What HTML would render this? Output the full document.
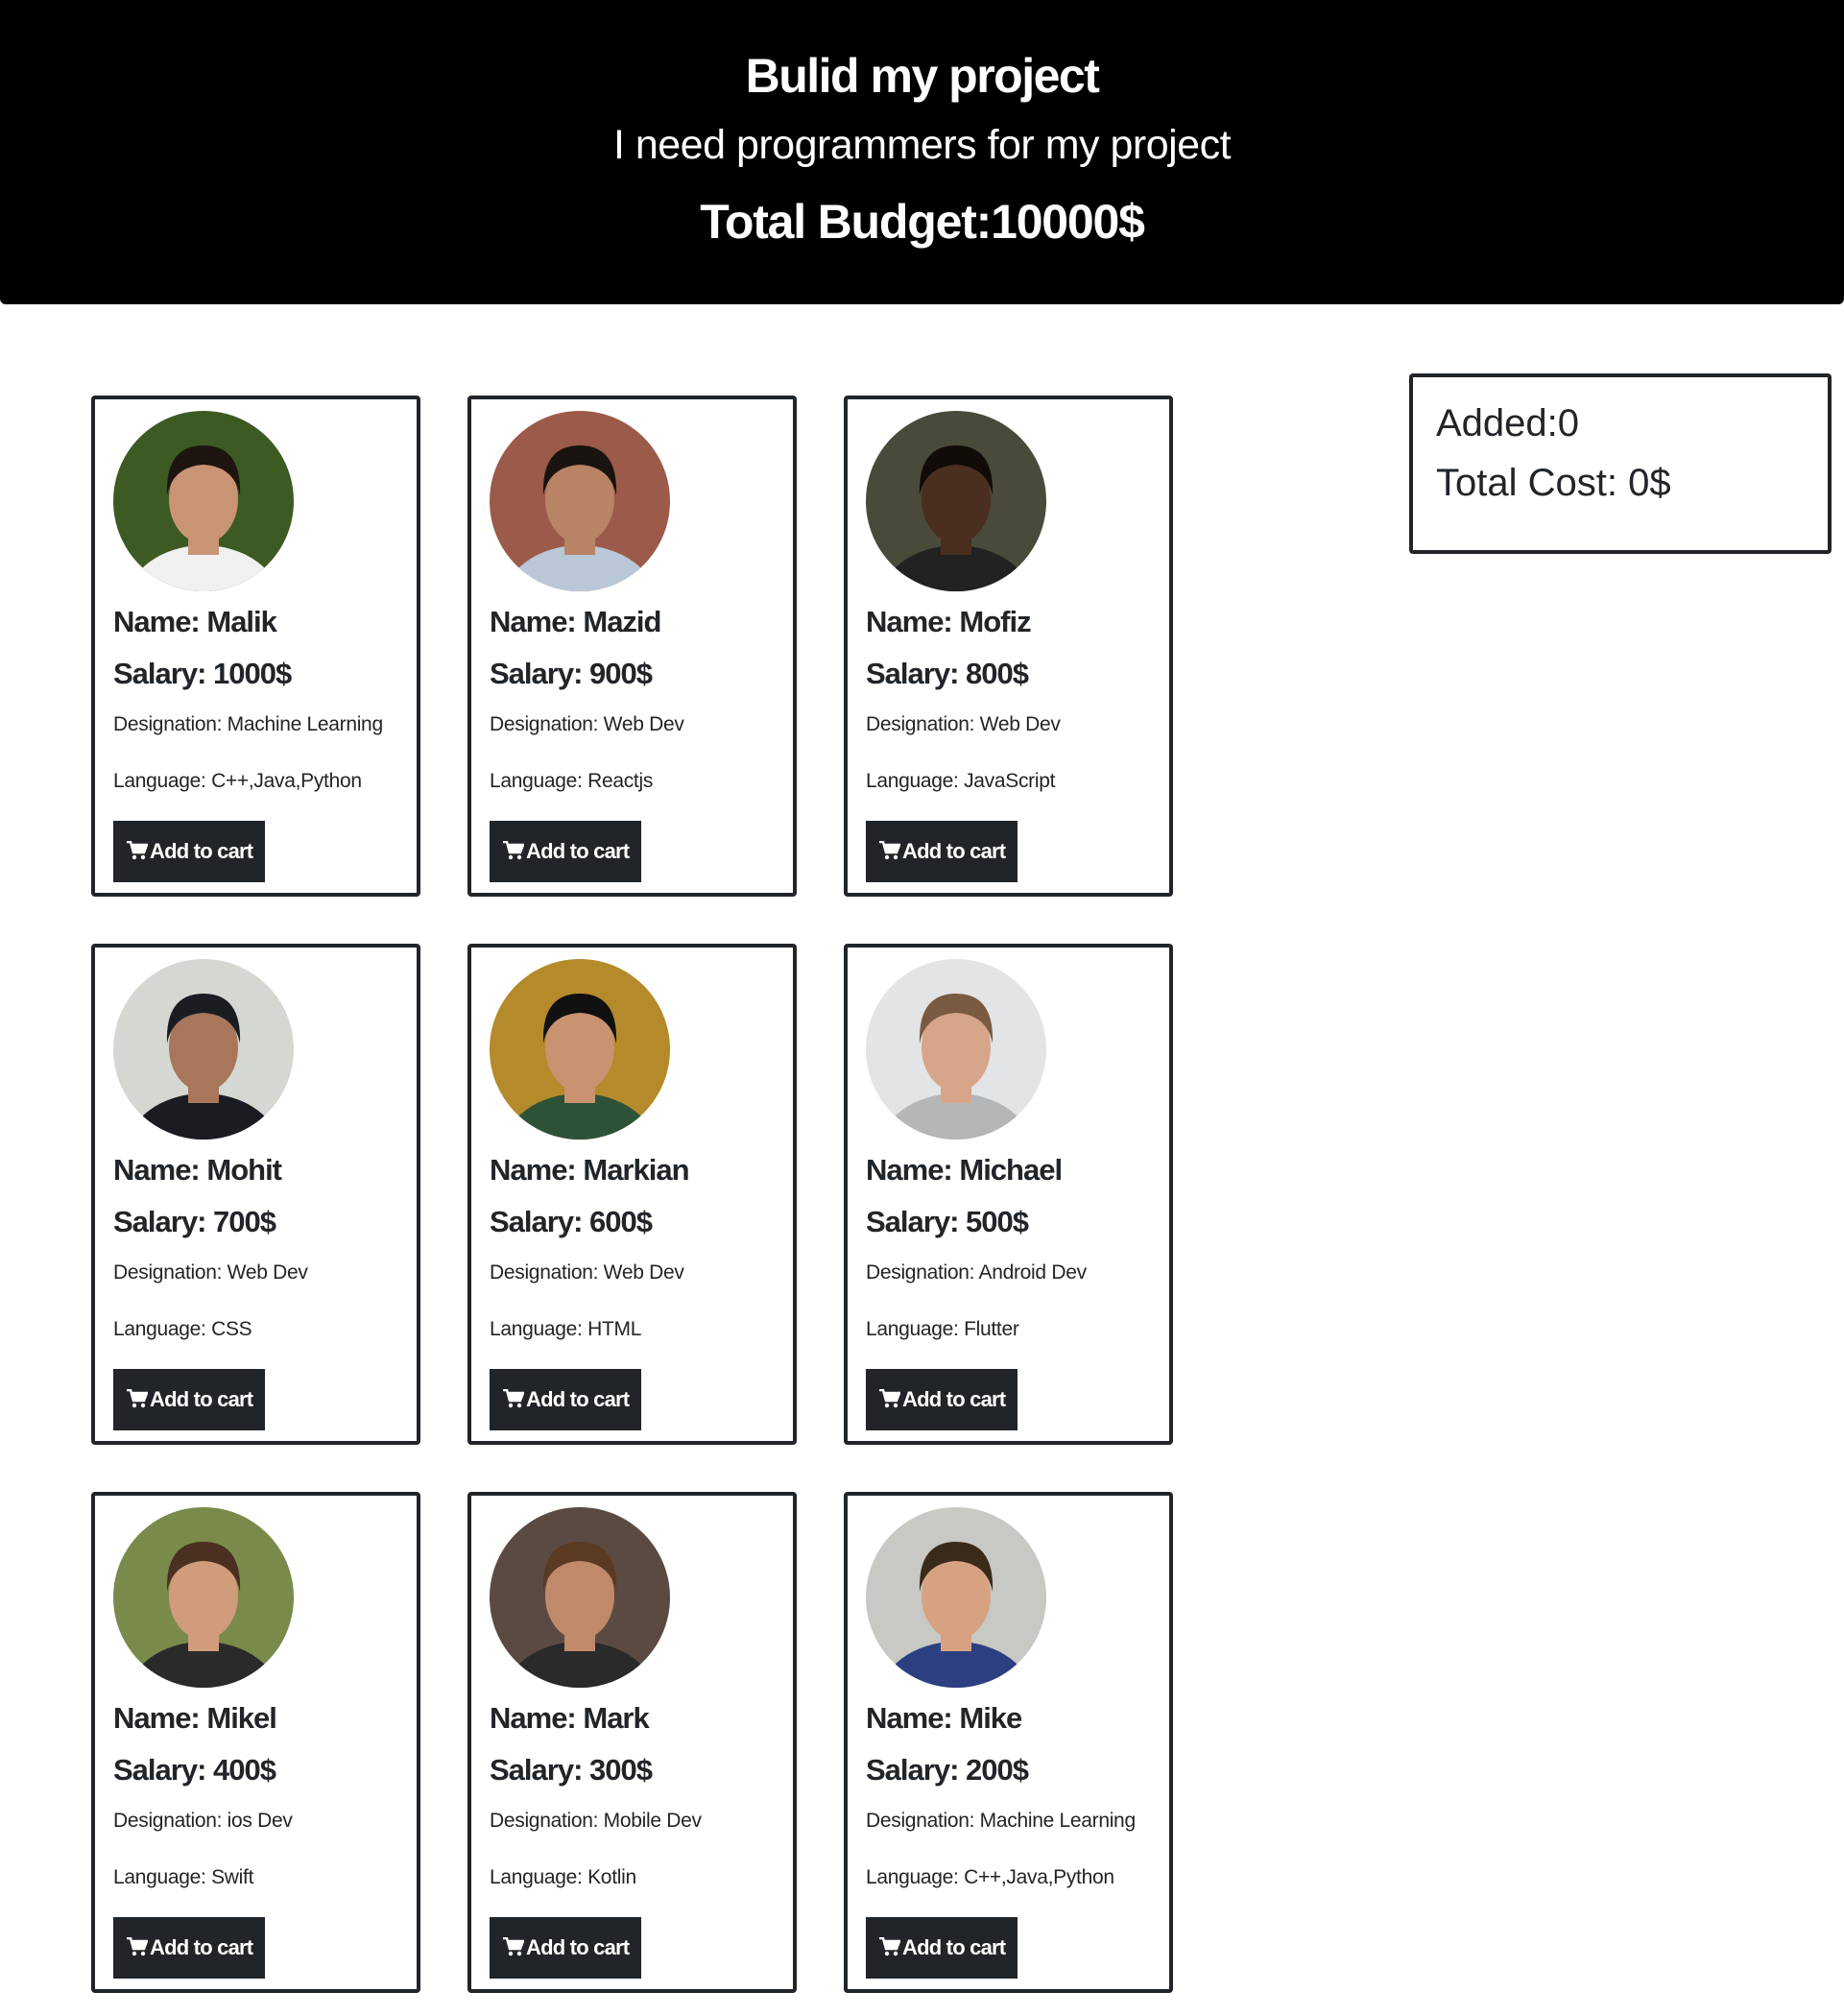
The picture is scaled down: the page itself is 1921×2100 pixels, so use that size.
<!DOCTYPE html>
<html><head><meta charset="utf-8"><style>
body{margin:0;width:1921px;height:2100px;background:#fff;position:relative;overflow:hidden;font-family:"Liberation Sans",sans-serif;color:#212529}
.hd{position:absolute;left:0;top:0;width:1921px;height:317px;background:#000;border-radius:0 0 6px 6px;color:#fff;text-align:center}
.hd div{position:absolute;left:0;width:100%;white-space:nowrap}
.card{position:absolute;border:4px solid #212529;border-radius:4px;box-sizing:border-box;width:343px;height:522px}
.card svg{position:absolute;left:19px;top:12px}
.card .t{position:absolute;left:19px;white-space:nowrap}
.n{font-weight:bold;font-size:31px;letter-spacing:-1px}
.d{font-size:21px;letter-spacing:-0.3px}
.btn{position:absolute;left:19px;top:439px;width:158px;height:64px;background:#212529;color:#fff;font-weight:bold;font-size:22px;letter-spacing:-0.8px;line-height:64px}
.btn svg{position:static;vertical-align:middle;margin:-4px 2px 0 14px}
.cart{position:absolute;left:1468px;top:389px;width:440px;height:188px;border:4px solid #212529;border-radius:4px;box-sizing:border-box;font-size:40px}
</style></head><body>
<div class="hd">
<div style="top:50px;font-size:50px;font-weight:bold;letter-spacing:-1.5px">Bulid my project</div>
<div style="top:127px;font-size:43px;letter-spacing:-0.5px">I need programmers for my project</div>
<div style="top:202px;font-size:50px;font-weight:bold;letter-spacing:-1.2px">Total Budget:10000$</div>
</div>
<div class="cart"><div style="position:absolute;left:24px;top:26px">Added:0</div><div style="position:absolute;left:24px;top:88px">Total Cost: 0$</div></div>
<div id="g"></div>
<script>
var P=[["Malik","1000","Machine Learning","C++,Java,Python","#3c5a22","#c99474","#1e1510","#f0f0f0"],
["Mazid","900","Web Dev","Reactjs","#9c5a4a","#b98366","#1a1410","#b9c7d6"],
["Mofiz","800","Web Dev","JavaScript","#4a4a3a","#4a2e20","#120c08","#222"],
["Mohit","700","Web Dev","CSS","#d5d8d2","#a8765a","#1b1d22","#1b1b22"],
["Markian","600","Web Dev","HTML","#b48a2a","#c99270","#111","#2e5238"],
["Michael","500","Android Dev","Flutter","#e2e4e6","#d7a58a","#7a5a40","#b4b6b8"],
["Mikel","400","ios Dev","Swift","#7a8a4a","#d09c7c","#4a3020","#2a2a2a"],
["Mark","300","Mobile Dev","Kotlin","#5a4a42","#c08a6a","#5a3a22","#2a2a2a"],
["Mike","200","Machine Learning","C++,Java,Python","#c8c8c4","#d6a282","#3a2a1a","#2c3f80"]];
var h="";
var cartI='<svg width="22" height="20" viewBox="0 0 22 20"><path d="M0 1h4l3 11h11l3-8H6" fill="none" stroke="#fff" stroke-width="2.5"/><path d="M6 4h15l-3 8H7z" fill="#fff"/><circle cx="8" cy="17" r="2.2" fill="#fff"/><circle cx="17" cy="17" r="2.2" fill="#fff"/></svg>';
P.forEach(function(p,i){var x=95+392*(i%3),y=412+571*Math.floor(i/3);
h+='<div class="card" style="left:'+x+'px;top:'+y+'px"><svg width="188" height="188" viewBox="0 0 188 188"><defs><clipPath id="c'+i+'"><circle cx="94" cy="94" r="94"/></clipPath></defs><g clip-path="url(#c'+i+')"><rect width="188" height="188" fill="'+p[4]+'"/><ellipse cx="94" cy="200" rx="80" ry="60" fill="'+p[7]+'"/><rect x="78" y="110" width="32" height="40" fill="'+p[5]+'"/><ellipse cx="94" cy="92" rx="36" ry="46" fill="'+p[5]+'"/><path d="M56 88 Q54 36 94 36 Q134 36 132 88 Q126 58 94 56 Q62 58 56 88Z" fill="'+p[6]+'"/></g></svg>'+
'<div class="t n" style="top:214px">Name: '+p[0]+'</div><div class="t n" style="top:268px">Salary: '+p[1]+'$</div><div class="t d" style="top:327px">Designation: '+p[2]+'</div><div class="t d" style="top:386px">Language: '+p[3]+'</div><div class="btn">'+cartI+'Add to cart</div></div>';});
document.getElementById("g").innerHTML=h;
</script>
</body></html>
